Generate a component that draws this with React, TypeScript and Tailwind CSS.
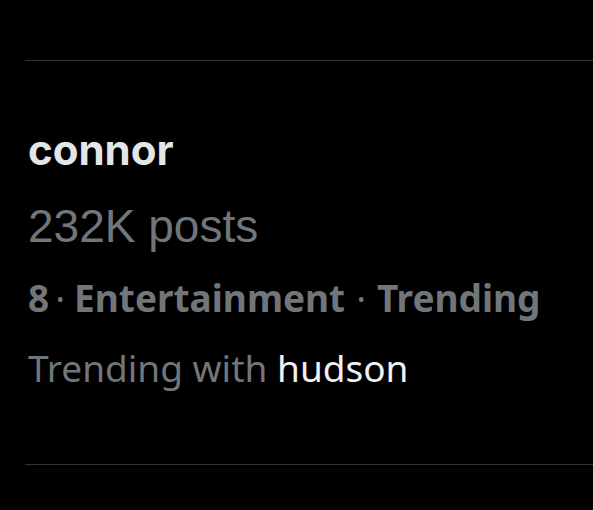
export default function App() {
  return (
    <div className="w-[593px] h-[510px] bg-black overflow-hidden">
      <div className="pt-[60px] pl-[25px]">
        <div className="h-px bg-[#2f3336]" />
      </div>
      <div className="pl-[28px]">
        <div
          className="mt-[64px] text-[42px] leading-[50px] font-bold text-[#e4e5e6]"
          style={{ fontFamily: "Inter, 'Liberation Sans', sans-serif" }}
        >
          connor
        </div>
        <div
          className="mt-[25px] text-[46px] leading-[52px] text-[#71767b]"
          style={{ fontFamily: "'Liberation Sans', Arial, sans-serif" }}
        >
          232K posts
        </div>
        <div
          className="mt-[24px] text-[37px] leading-[44px] font-bold text-[#71767b] flex items-baseline"
          style={{ fontFamily: "'Noto Sans', sans-serif" }}
        >
          <span>8</span>
          <span className="ml-[6px] mr-[9px] font-normal">·</span>
          <span>Entertainment</span>
          <span className="ml-[11px] mr-[11px] font-normal">·</span>
          <span>Trending</span>
        </div>
        <div
          className="mt-[26px] text-[37px] leading-[44px] text-[#71767b]"
          style={{ fontFamily: "'Noto Sans', sans-serif" }}
        >
          Trending with <span className="text-[#eff1f2]">hudson</span>
        </div>
      </div>
      <div className="pt-[74px] pl-[25px]">
        <div className="h-px bg-[#2f3336]" />
      </div>
    </div>
  );
}
